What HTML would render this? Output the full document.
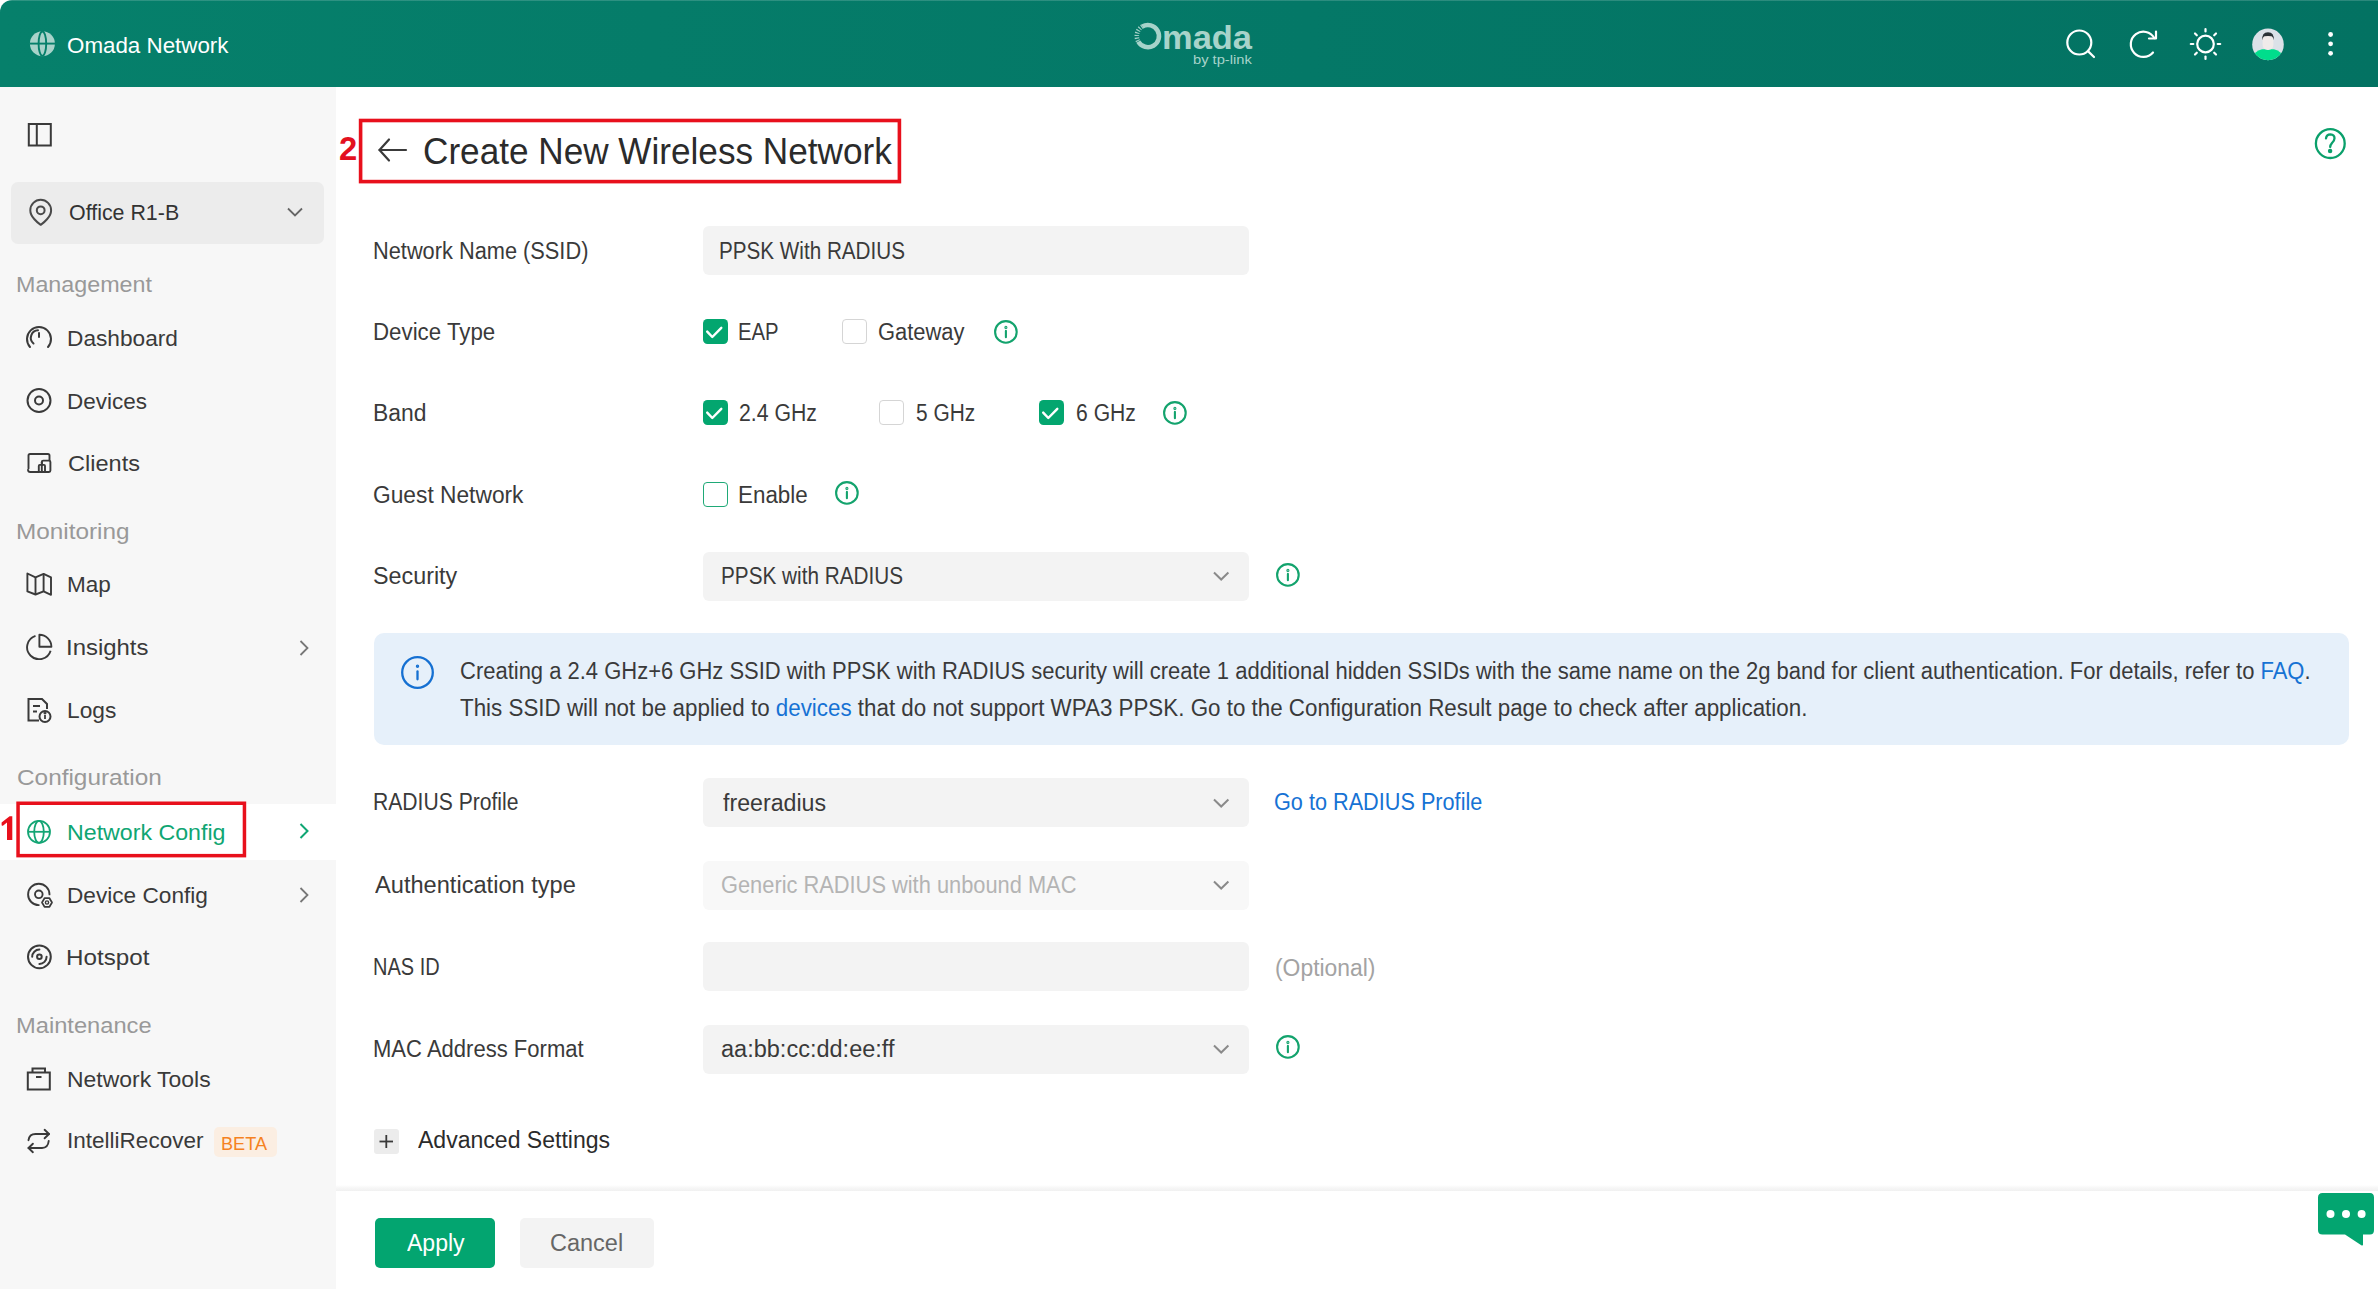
<!DOCTYPE html>
<html><head><meta charset="utf-8">
<style>
*{box-sizing:border-box;margin:0;padding:0}
html,body{width:2378px;height:1289px;overflow:hidden;background:#fff;font-family:"Liberation Sans",sans-serif;color:#333}
.abs{position:absolute}
.tx{position:absolute;white-space:nowrap;line-height:40px;height:40px;transform-origin:0 0}
</style></head><body>
<!-- header -->
<div class="abs" style="left:0;top:0;width:2378px;height:87px;background:linear-gradient(90deg,#06806b 0%,#047867 55%,#037262 100%);border-top-left-radius:12px"></div>
<div class="abs" style="left:8px;top:0;width:2370px;height:1px;background:rgba(255,255,255,0.16)"></div>
<svg class="abs" style="left:29px;top:30px" width="27" height="27" viewBox="0 0 27 27">
<circle cx="13.4" cy="13.7" r="12.5" fill="#a8d3ca"/>
<ellipse cx="13.4" cy="13.7" rx="3.8" ry="12.2" fill="none" stroke="#06806b" stroke-width="1.9"/>
<line x1="0.5" y1="13.6" x2="26.5" y2="13.6" stroke="#06806b" stroke-width="1.9"/>
</svg>
<svg class="abs" style="left:1130px;top:18px" width="40" height="36" viewBox="0 0 40 36" fill="none" stroke="#a7d3ca" stroke-width="4.6">
<path d="M8.29 23.65 A11.1 11.1 0 1 0 12.35 8.49"/>
<path d="M12.35 8.49 A11.1 11.1 0 0 0 8.29 23.65" stroke-dasharray="1.1 1.5"/>
</svg>
<!-- header right icons -->
<svg class="abs" style="left:2060px;top:24px" width="40" height="40" viewBox="0 0 40 40" fill="none" stroke="#fff" stroke-width="2.2" stroke-linecap="round">
<circle cx="19.3" cy="18.5" r="12"/><line x1="28.2" y1="27.4" x2="34" y2="33"/>
</svg>
<svg class="abs" style="left:2123px;top:24px" width="40" height="40" viewBox="0 0 40 40" fill="none" stroke="#fff" stroke-width="2.2" stroke-linecap="round" stroke-linejoin="round">
<path d="M31.3 14 A12.6 12.6 0 1 0 30 28.5"/><polyline points="26,14.5 33,14.5 33,7.5"/>
</svg>
<svg class="abs" style="left:2186px;top:24px" width="40" height="40" viewBox="0 0 40 40" fill="none" stroke="#fff" stroke-width="2.2" stroke-linecap="round">
<circle cx="19.5" cy="20" r="8.3"/>
<line x1="19.5" y1="5" x2="19.5" y2="7.5"/><line x1="19.5" y1="32.5" x2="19.5" y2="35"/>
<line x1="4.8" y1="20" x2="7.3" y2="20"/><line x1="31.7" y1="20" x2="34.2" y2="20"/>
<line x1="9" y1="9.5" x2="10.8" y2="11.3"/><line x1="28.2" y1="28.7" x2="30" y2="30.5"/>
<line x1="30" y1="9.5" x2="28.2" y2="11.3"/><line x1="10.8" y1="28.7" x2="9" y2="30.5"/>
</svg>
<svg class="abs" style="left:2250px;top:26px" width="36" height="36" viewBox="0 0 36 36">
<defs><clipPath id="av"><circle cx="18" cy="18.4" r="15.8"/></clipPath></defs>
<circle cx="18" cy="18.4" r="15.8" fill="#dbe1e8"/>
<g clip-path="url(#av)">
<path d="M2 34 Q4 24.5 12 23.2 L24 23.2 Q32 24.5 34 34 L34 40 L2 40 Z" fill="#00dd8c"/>
<rect x="12.6" y="8" width="10.8" height="16" rx="5" fill="#f0ebea"/>
<path d="M12.2 14.5 Q11.6 6.2 18 6.2 Q24.4 6.2 23.8 14.5 Q23 10.6 21.5 10.2 Q18 9.6 14.5 10.2 Q13 10.6 12.2 14.5 Z" fill="#2a3136"/>
</g>
</svg>
<svg class="abs" style="left:2320px;top:26px" width="20" height="36" viewBox="0 0 20 36" fill="#fff">
<circle cx="10.6" cy="8.5" r="2.4"/><circle cx="10.6" cy="17.8" r="2.4"/><circle cx="10.6" cy="27.3" r="2.4"/>
</svg>

<!-- sidebar -->
<div class="abs" style="left:0;top:87px;width:336px;height:1202px;background:#f7f7f7"></div>
<svg class="abs" style="left:26px;top:121px" width="28" height="28" viewBox="0 0 28 28" fill="none" stroke="#3a3a3a" stroke-width="2">
<rect x="2.8" y="3" width="22" height="21.5"/><line x1="10.8" y1="3" x2="10.8" y2="24.5"/>
</svg>
<div class="abs" style="left:11px;top:181.5px;width:313px;height:62.5px;background:#ececec;border-radius:7px"></div>
<svg class="abs" style="left:27px;top:198px" width="28" height="30" viewBox="0 0 28 30" fill="none" stroke="#4a4a4a" stroke-width="2" stroke-linejoin="round">
<path d="M13.7 26.8 Q10 24.3 7.2 21 Q3.3 16.8 3.3 12.2 A10.4 10.4 0 0 1 24.1 12.2 Q24.1 16.8 20.2 21 Q17.4 24.3 13.7 26.8 Z"/><circle cx="13.7" cy="12.3" r="3.9"/>
</svg>
<svg class="abs" style="left:285px;top:204px" width="20" height="16" viewBox="0 0 20 16" fill="none" stroke="#666" stroke-width="1.8"><polyline points="3,4.5 10,11.5 17,4.5"/></svg>

<div class="abs" style="left:0;top:804px;width:336px;height:56px;background:#fff"></div>
<svg class="abs" style="left:0;top:790px" width="260" height="80" viewBox="0 790 260 80"><rect x="18.05" y="803.25" width="226.4" height="52.4" fill="none" stroke="#e8101c" stroke-width="3.5"/></svg>
<svg class="abs" style="left:0;top:810px" width="16" height="34" viewBox="0 0 16 34"><path d="M9.6 6.2 H12.3 V29.9 H7 V12.6 L3.2 15.4 Q1.6 16.4 1.6 14.8 V12.4 Z" fill="#e8101c"/></svg>
<svg class="abs" style="left:296px;top:638px" width="16" height="20" viewBox="0 0 16 20" fill="none" stroke="#777" stroke-width="1.8"><polyline points="4.5,3 11.5,10 4.5,17"/></svg>
<svg class="abs" style="left:296px;top:821px" width="16" height="20" viewBox="0 0 16 20" fill="none" stroke="#0fa673" stroke-width="2"><polyline points="4.5,3 11.5,10 4.5,17"/></svg>
<svg class="abs" style="left:296px;top:885px" width="16" height="20" viewBox="0 0 16 20" fill="none" stroke="#777" stroke-width="1.8"><polyline points="4.5,3 11.5,10 4.5,17"/></svg>
<div class="abs" style="left:214px;top:1127px;width:63px;height:30px;background:#fbeee2;border-radius:5px"></div>
<!-- nav icons -->
<svg class="abs" style="left:25px;top:324px" width="28" height="26" viewBox="0 0 28 26" fill="none" stroke="#3a3a3a" stroke-width="2" stroke-linecap="round">
<path d="M5 23 A12 12 0 1 1 23 23"/><path d="M8.5 19.5 A7.5 7.5 0 0 1 13 6.3"/><line x1="14" y1="9" x2="14" y2="13"/>
</svg>
<svg class="abs" style="left:25px;top:387px" width="28" height="28" viewBox="0 0 28 28" fill="none" stroke="#3a3a3a" stroke-width="2">
<circle cx="14" cy="13.5" r="11.5"/><circle cx="14" cy="13.5" r="4"/>
</svg>
<svg class="abs" style="left:25px;top:451px" width="28" height="24" viewBox="0 0 28 24" fill="none" stroke="#3a3a3a" stroke-width="1.9" stroke-linejoin="round" stroke-linecap="round">
<path d="M3.5 17.5 V4.6 Q3.5 3 5.1 3 H22.9 Q24.5 3 24.5 4.6 V9"/><path d="M3 19 Q3.2 21 5.2 21 H13.8"/><rect x="16.8" y="9.6" width="8.6" height="11.4" rx="1.4"/><rect x="13.8" y="13.9" width="6.2" height="7.1" rx="1"/><path d="M16.9 13.9 V11.2"/>
</svg>
<svg class="abs" style="left:25px;top:571px" width="28" height="26" viewBox="0 0 28 26" fill="none" stroke="#3a3a3a" stroke-width="1.9" stroke-linejoin="round">
<path d="M2.4 2.5 L10.5 6.4 L18.6 2.9 L26 6.4 V23.8 L18.6 20.4 L10.5 23.5 L2.4 20.4 Z"/><line x1="10.5" y1="6.4" x2="10.5" y2="23.5"/><line x1="18.6" y1="2.9" x2="18.6" y2="20.4"/>
</svg>
<svg class="abs" style="left:25px;top:632px" width="28" height="28" viewBox="0 0 28 28" fill="none" stroke="#3a3a3a" stroke-width="1.9" stroke-linejoin="round">
<path d="M10.5 3.8 A12 12 0 1 0 25.6 18.7"/><path d="M14.4 2.8 V14.8 H26.4 A12 12 0 0 0 14.4 2.8 Z"/>
</svg>
<svg class="abs" style="left:25px;top:696px" width="28" height="28" viewBox="0 0 28 28" fill="none" stroke="#3a3a3a" stroke-width="2">
<path d="M14 24.5 H3.5 V3 H17 L22 8 V13"/><line x1="8" y1="10" x2="15" y2="10"/><line x1="8" y1="15.5" x2="12" y2="15.5"/>
<circle cx="20" cy="20.5" r="5.5"/><line x1="20" y1="19" x2="20" y2="23" stroke-width="1.8"/><circle cx="20" cy="16.8" r="0.6" fill="#333"/>
</svg>
<svg class="abs" style="left:25px;top:818px" width="28" height="28" viewBox="0 0 28 28" fill="none" stroke="#14a574" stroke-width="1.8">
<circle cx="14" cy="13.8" r="11"/><ellipse cx="14" cy="13.8" rx="4.8" ry="11"/><line x1="3" y1="13.8" x2="25" y2="13.8"/>
</svg>
<svg class="abs" style="left:25px;top:881px" width="30" height="30" viewBox="0 0 30 30" fill="none" stroke="#3a3a3a" stroke-width="1.9" stroke-linecap="round" stroke-linejoin="round">
<path d="M24.5 13.4 A10.7 10.7 0 1 0 13.8 24.1"/><circle cx="13.8" cy="13.3" r="3.8"/>
<polygon points="27,21.5 24.5,25.8 19.5,25.8 17,21.5 19.5,17.2 24.5,17.2" stroke-width="1.7"/><circle cx="22" cy="21.5" r="1.6" stroke-width="1.4"/>
</svg>
<svg class="abs" style="left:25px;top:943px" width="28" height="28" viewBox="0 0 28 28" fill="none" stroke="#3a3a3a" stroke-width="2" stroke-linecap="round">
<circle cx="14.4" cy="13.8" r="11.4"/><path d="M7.2 13.8 A7.2 7.2 0 0 1 14.4 6.6"/><path d="M21.6 13.8 A7.2 7.2 0 0 1 14.4 21"/><circle cx="14.4" cy="13.8" r="2.3"/>
</svg>
<svg class="abs" style="left:25px;top:1066px" width="28" height="26" viewBox="0 0 28 26" fill="none" stroke="#3a3a3a" stroke-width="2">
<rect x="2.8" y="6.5" width="22" height="17"/><path d="M7.5 6.5 V2.5 H20 V6.5"/><line x1="11" y1="11" x2="16.5" y2="11"/>
</svg>
<svg class="abs" style="left:25px;top:1128px" width="28" height="26" viewBox="0 0 28 26" fill="none" stroke="#3a3a3a" stroke-width="1.9" stroke-linecap="round" stroke-linejoin="round">
<path d="M3.5 12.2 Q4.3 6 10.5 6 H24"/><polyline points="19.6,1.8 24,6 19.6,10.3"/>
<path d="M23.7 13 Q23 20 17 20 H3.5"/><polyline points="7.9,15.7 3.5,20 7.9,24.2"/>
</svg>

<!-- main -->
<svg class="abs" style="left:340px;top:100px" width="580" height="100" viewBox="340 100 580 100"><rect x="360.6" y="120.5" width="538.8" height="61.1" fill="none" stroke="#e8101c" stroke-width="3.6"/></svg>
<svg class="abs" style="left:376px;top:136px" width="34" height="28" viewBox="0 0 34 28" fill="none" stroke="#3a3a3a" stroke-width="2.2" stroke-linecap="round" stroke-linejoin="round">
<polyline points="13,3.5 3.5,14 13,24.5"/><line x1="3.5" y1="14" x2="30" y2="14"/>
</svg>
<svg class="abs" style="left:2312px;top:126px" width="36" height="36" viewBox="0 0 36 36" fill="none" stroke="#0aa06b" stroke-width="2.3" stroke-linecap="round">
<circle cx="18.3" cy="17.6" r="14.4"/><path d="M14 12.3 Q14.5 8.3 18.5 8.3 Q22.5 8.5 22.5 12.2 Q22.5 14.5 20 17 Q18.2 19 18.2 21"/><circle cx="18.1" cy="25.1" r="1.1" fill="#0aa06b"/>
</svg>
<!-- inputs -->
<div class="abs" style="left:703px;top:225.5px;width:546px;height:49.5px;background:#f3f3f3;border-radius:6px"></div>
<div class="abs" style="left:703px;top:551.5px;width:546px;height:49.5px;background:#f3f3f3;border-radius:6px"></div>
<div class="abs" style="left:703px;top:778px;width:546px;height:49px;background:#f3f3f3;border-radius:6px"></div>
<div class="abs" style="left:703px;top:860.5px;width:546px;height:49px;background:#f8f8f8;border-radius:6px"></div>
<div class="abs" style="left:703px;top:942px;width:546px;height:49px;background:#f3f3f3;border-radius:6px"></div>
<div class="abs" style="left:703px;top:1024.5px;width:546px;height:49px;background:#f3f3f3;border-radius:6px"></div>
<!-- select chevrons -->
<svg class="abs" style="left:1211px;top:568px" width="20" height="16" viewBox="0 0 20 16" fill="none" stroke="#8a8a8a" stroke-width="2"><polyline points="3,4.5 10.2,11.5 17.4,4.5"/></svg>
<svg class="abs" style="left:1211px;top:794.5px" width="20" height="16" viewBox="0 0 20 16" fill="none" stroke="#8a8a8a" stroke-width="2"><polyline points="3,4.5 10.2,11.5 17.4,4.5"/></svg>
<svg class="abs" style="left:1211px;top:877px" width="20" height="16" viewBox="0 0 20 16" fill="none" stroke="#8a8a8a" stroke-width="2"><polyline points="3,4.5 10.2,11.5 17.4,4.5"/></svg>
<svg class="abs" style="left:1211px;top:1041px" width="20" height="16" viewBox="0 0 20 16" fill="none" stroke="#8a8a8a" stroke-width="2"><polyline points="3,4.5 10.2,11.5 17.4,4.5"/></svg>
<!-- checkboxes -->
<div class="abs" style="left:703px;top:319px;width:25px;height:25px;background:#03a66f;border-radius:4.5px"></div><svg class="abs" style="left:703px;top:319px" width="25" height="25" viewBox="0 0 25 25" fill="none" stroke="#fff" stroke-width="2.4" stroke-linecap="round" stroke-linejoin="round"><polyline points="4.2,12.6 9.3,18 18.3,8.8"/></svg>
<div class="abs" style="left:841.6px;top:319px;width:25px;height:25px;border:1.6px solid #d5d5d5;background:#fff;border-radius:4px"></div>
<div class="abs" style="left:703px;top:400px;width:25px;height:25px;background:#03a66f;border-radius:4.5px"></div><svg class="abs" style="left:703px;top:400px" width="25" height="25" viewBox="0 0 25 25" fill="none" stroke="#fff" stroke-width="2.4" stroke-linecap="round" stroke-linejoin="round"><polyline points="4.2,12.6 9.3,18 18.3,8.8"/></svg>
<div class="abs" style="left:879px;top:400px;width:25px;height:25px;border:1.6px solid #d5d5d5;background:#fff;border-radius:4px"></div>
<div class="abs" style="left:1039px;top:400px;width:25px;height:25px;background:#03a66f;border-radius:4.5px"></div><svg class="abs" style="left:1039px;top:400px" width="25" height="25" viewBox="0 0 25 25" fill="none" stroke="#fff" stroke-width="2.4" stroke-linecap="round" stroke-linejoin="round"><polyline points="4.2,12.6 9.3,18 18.3,8.8"/></svg>
<div class="abs" style="left:702.5px;top:481.5px;width:25px;height:25px;border:1.9px solid #1fa977;background:#fff;border-radius:4px"></div>
<!-- info icons -->
<svg class="abs" style="left:992px;top:317.5px" width="28" height="28" viewBox="0 0 28 28" fill="none" stroke="#13a36d" stroke-width="2.1" stroke-linecap="round"><circle cx="13.9" cy="13.9" r="10.8"/><line x1="13.9" y1="12.9" x2="13.9" y2="19.2"/><circle cx="13.9" cy="9.4" r="0.5" fill="#13a36d" stroke-width="2.1"/></svg>
<svg class="abs" style="left:1161px;top:398.5px" width="28" height="28" viewBox="0 0 28 28" fill="none" stroke="#13a36d" stroke-width="2.1" stroke-linecap="round"><circle cx="13.9" cy="13.9" r="10.8"/><line x1="13.9" y1="12.9" x2="13.9" y2="19.2"/><circle cx="13.9" cy="9.4" r="0.5" fill="#13a36d" stroke-width="2.1"/></svg>
<svg class="abs" style="left:833px;top:479px" width="28" height="28" viewBox="0 0 28 28" fill="none" stroke="#13a36d" stroke-width="2.1" stroke-linecap="round"><circle cx="13.9" cy="13.9" r="10.8"/><line x1="13.9" y1="12.9" x2="13.9" y2="19.2"/><circle cx="13.9" cy="9.4" r="0.5" fill="#13a36d" stroke-width="2.1"/></svg>
<svg class="abs" style="left:1274px;top:561px" width="28" height="28" viewBox="0 0 28 28" fill="none" stroke="#13a36d" stroke-width="2.1" stroke-linecap="round"><circle cx="13.9" cy="13.9" r="10.8"/><line x1="13.9" y1="12.9" x2="13.9" y2="19.2"/><circle cx="13.9" cy="9.4" r="0.5" fill="#13a36d" stroke-width="2.1"/></svg>
<svg class="abs" style="left:1274px;top:1033.3px" width="28" height="28" viewBox="0 0 28 28" fill="none" stroke="#13a36d" stroke-width="2.1" stroke-linecap="round"><circle cx="13.9" cy="13.9" r="10.8"/><line x1="13.9" y1="12.9" x2="13.9" y2="19.2"/><circle cx="13.9" cy="9.4" r="0.5" fill="#13a36d" stroke-width="2.1"/></svg>
<!-- info box -->
<div class="abs" style="left:374px;top:632.5px;width:1975px;height:112px;background:#e6f0fa;border-radius:10px"></div>
<svg class="abs" style="left:399px;top:654px" width="38" height="38" viewBox="0 0 38 38" fill="none" stroke="#1570d2" stroke-width="2.3" stroke-linecap="round">
<circle cx="18.5" cy="18.5" r="15.3"/><line x1="18.5" y1="17.4" x2="18.5" y2="25.3"/><circle cx="18.5" cy="12.3" r="0.6" fill="#1570d2" stroke-width="2.2"/>
</svg>
<!-- advanced -->
<div class="abs" style="left:374px;top:1129px;width:25px;height:24.5px;background:#ececec;border-radius:3px"></div>
<svg class="abs" style="left:374px;top:1129px" width="25" height="25" viewBox="0 0 25 25" fill="none" stroke="#3a3a3a" stroke-width="1.8"><line x1="5.5" y1="12.5" x2="19" y2="12.5"/><line x1="12.3" y1="6" x2="12.3" y2="19"/></svg>
<!-- footer -->
<div class="abs" style="left:336px;top:1185px;width:2042px;height:6px;background:linear-gradient(180deg,#fff 0%,#f6f6f6 50%,#f1f1f1 100%)"></div>
<div class="abs" style="left:375px;top:1218px;width:120px;height:49.5px;background:#03a570;border-radius:5px"></div>
<div class="abs" style="left:520px;top:1218px;width:134px;height:49.5px;background:#f3f3f3;border-radius:5px"></div>
<svg class="abs" style="left:2316px;top:1191px" width="62" height="60" viewBox="0 0 62 60">
<path d="M6.5 2 H54 Q58 2 58 6.5 V39 Q58 43.5 54 43.5 H47 V53.5 Q47 55.2 45.3 54.3 L29 43.5 H6.5 Q2 43.5 2 39 V6.5 Q2 2 6.5 2 Z" fill="#03a570"/>
<circle cx="14.5" cy="23" r="4" fill="#fff"/><circle cx="30" cy="23" r="4" fill="#fff"/><circle cx="45.6" cy="23" r="4" fill="#fff"/>
</svg>
<div class="tx" style="left:66.56px;top:25.60px;font-size:21.5px;font-weight:400;color:#fff;transform:scaleX(1.0396)">Omada Network</div>
<div class="tx" style="left:68.64px;top:193.00px;font-size:22.3px;font-weight:400;color:#333;transform:scaleX(0.9593)">Office R1-B</div>
<div class="tx" style="left:16.11px;top:264.60px;font-size:22.3px;font-weight:400;color:#999;transform:scaleX(1.0445)">Management</div>
<div class="tx" style="left:66.87px;top:319.20px;font-size:22.3px;font-weight:400;color:#3a3a3a;transform:scaleX(1.0170)">Dashboard</div>
<div class="tx" style="left:66.88px;top:381.90px;font-size:22.3px;font-weight:400;color:#3a3a3a;transform:scaleX(1.0078)">Devices</div>
<div class="tx" style="left:67.54px;top:444.20px;font-size:22.3px;font-weight:400;color:#3a3a3a;transform:scaleX(1.0561)">Clients</div>
<div class="tx" style="left:16.12px;top:511.70px;font-size:22.3px;font-weight:400;color:#999;transform:scaleX(1.0911)">Monitoring</div>
<div class="tx" style="left:66.58px;top:565.20px;font-size:22.3px;font-weight:400;color:#3a3a3a;transform:scaleX(1.0098)">Map</div>
<div class="tx" style="left:66.45px;top:627.60px;font-size:22.3px;font-weight:400;color:#3a3a3a;transform:scaleX(1.0730)">Insights</div>
<div class="tx" style="left:66.56px;top:690.50px;font-size:22.3px;font-weight:400;color:#3a3a3a;transform:scaleX(1.0196)">Logs</div>
<div class="tx" style="left:16.91px;top:758.00px;font-size:22.3px;font-weight:400;color:#999;transform:scaleX(1.0923)">Configuration</div>
<div class="tx" style="left:66.52px;top:813.30px;font-size:22.3px;font-weight:400;color:#0fa673;transform:scaleX(1.0396)">Network Config</div>
<div class="tx" style="left:66.57px;top:875.70px;font-size:22.3px;font-weight:400;color:#3a3a3a;transform:scaleX(1.0154)">Device Config</div>
<div class="tx" style="left:66.43px;top:938.00px;font-size:22.3px;font-weight:400;color:#3a3a3a;transform:scaleX(1.0853)">Hotspot</div>
<div class="tx" style="left:15.88px;top:1005.80px;font-size:22.3px;font-weight:400;color:#999;transform:scaleX(1.0624)">Maintenance</div>
<div class="tx" style="left:66.54px;top:1059.50px;font-size:22.3px;font-weight:400;color:#3a3a3a;transform:scaleX(1.0285)">Network Tools</div>
<div class="tx" style="left:66.58px;top:1121.00px;font-size:22.3px;font-weight:400;color:#3a3a3a;transform:scaleX(1.0105)">IntelliRecover</div>
<div class="tx" style="left:221.49px;top:1123.80px;font-size:18px;font-weight:400;color:#f5821f;transform:scaleX(1.0068)">BETA</div>
<div class="tx" style="left:339.01px;top:129.20px;font-size:33px;font-weight:700;color:#e3111f;transform:scaleX(0.9937)">2</div>
<div class="tx" style="left:422.70px;top:132.00px;font-size:37px;font-weight:400;color:#2b2b2b;transform:scaleX(0.9499)">Create New Wireless Network</div>
<div class="tx" style="left:372.91px;top:230.80px;font-size:23px;font-weight:400;color:#3a3a3a;transform:scaleX(0.9469)">Network Name (SSID)</div>
<div class="tx" style="left:719.20px;top:230.60px;font-size:23px;font-weight:400;color:#3a3a3a;transform:scaleX(0.8980)">PPSK With RADIUS</div>
<div class="tx" style="left:372.86px;top:312.20px;font-size:23px;font-weight:400;color:#3a3a3a;transform:scaleX(0.9691)">Device Type</div>
<div class="tx" style="left:738.23px;top:312.00px;font-size:23px;font-weight:400;color:#3a3a3a;transform:scaleX(0.8837)">EAP</div>
<div class="tx" style="left:878.45px;top:312.00px;font-size:23px;font-weight:400;color:#3a3a3a;transform:scaleX(0.9533)">Gateway</div>
<div class="tx" style="left:372.81px;top:393.40px;font-size:23px;font-weight:400;color:#3a3a3a;transform:scaleX(0.9940)">Band</div>
<div class="tx" style="left:739.08px;top:392.80px;font-size:23px;font-weight:400;color:#3a3a3a;transform:scaleX(0.9244)">2.4 GHz</div>
<div class="tx" style="left:916.39px;top:393.00px;font-size:23px;font-weight:400;color:#3a3a3a;transform:scaleX(0.9079)">5 GHz</div>
<div class="tx" style="left:1075.88px;top:393.30px;font-size:23px;font-weight:400;color:#3a3a3a;transform:scaleX(0.9190)">6 GHz</div>
<div class="tx" style="left:373.21px;top:474.60px;font-size:23px;font-weight:400;color:#3a3a3a;transform:scaleX(0.9894)">Guest Network</div>
<div class="tx" style="left:738.05px;top:474.60px;font-size:23px;font-weight:400;color:#3a3a3a;transform:scaleX(0.9739)">Enable</div>
<div class="tx" style="left:373.19px;top:556.20px;font-size:23px;font-weight:400;color:#3a3a3a;transform:scaleX(1.0134)">Security</div>
<div class="tx" style="left:720.90px;top:555.80px;font-size:23px;font-weight:400;color:#3a3a3a;transform:scaleX(0.9015)">PPSK with RADIUS</div>
<div class="tx" style="left:460.24px;top:650.80px;font-size:23px;font-weight:400;color:#3a3a3a;transform:scaleX(0.9558)">Creating a 2.4 GHz+6 GHz SSID with PPSK with RADIUS security will create 1 additional hidden SSIDs with the same name on the 2g band for client authentication. For details, refer to <span style="color:#1672d4">FAQ</span>.</div>
<div class="tx" style="left:460.03px;top:688.00px;font-size:23px;font-weight:400;color:#3a3a3a;transform:scaleX(0.9725)">This SSID will not be applied to <span style="color:#1672d4">devices</span> that do not support WPA3 PPSK. Go to the Configuration Result page to check after application.</div>
<div class="tx" style="left:372.96px;top:782.20px;font-size:23px;font-weight:400;color:#3a3a3a;transform:scaleX(0.9179)">RADIUS Profile</div>
<div class="tx" style="left:722.90px;top:782.50px;font-size:23px;font-weight:400;color:#3a3a3a;transform:scaleX(1.0079)">freeradius</div>
<div class="tx" style="left:1273.66px;top:781.90px;font-size:23px;font-weight:400;color:#1672d4;transform:scaleX(0.9420)">Go to RADIUS Profile</div>
<div class="tx" style="left:374.80px;top:864.50px;font-size:23px;font-weight:400;color:#3a3a3a;transform:scaleX(1.0267)">Authentication type</div>
<div class="tx" style="left:721.25px;top:864.80px;font-size:23px;font-weight:400;color:#b4b4b4;transform:scaleX(0.9489)">Generic RADIUS with unbound MAC</div>
<div class="tx" style="left:373.06px;top:947.00px;font-size:23px;font-weight:400;color:#3a3a3a;transform:scaleX(0.8689)">NAS ID</div>
<div class="tx" style="left:1275.21px;top:947.50px;font-size:23px;font-weight:400;color:#a3a3a3;transform:scaleX(0.9949)">(Optional)</div>
<div class="tx" style="left:372.88px;top:1028.60px;font-size:23px;font-weight:400;color:#3a3a3a;transform:scaleX(0.9583)">MAC Address Format</div>
<div class="tx" style="left:721.18px;top:1028.70px;font-size:23px;font-weight:400;color:#3a3a3a;transform:scaleX(1.0225)">aa:bb:cc:dd:ee:ff</div>
<div class="tx" style="left:418.40px;top:1119.60px;font-size:23px;font-weight:400;color:#2b2b2b;transform:scaleX(1.0016)">Advanced Settings</div>
<div class="tx" style="left:406.60px;top:1223.20px;font-size:23px;font-weight:400;color:#fff;transform:scaleX(1.0018)">Apply</div>
<div class="tx" style="left:550.48px;top:1223.30px;font-size:23px;font-weight:400;color:#666;transform:scaleX(1.0217)">Cancel</div>
<div class="tx" style="left:1161.77px;top:17.00px;font-size:34px;font-weight:700;color:#a7d3ca;transform:scaleX(1.0138)">mada</div>
<div class="tx" style="left:1192.87px;top:39.60px;font-size:13px;font-weight:400;color:#a7d3ca;transform:scaleX(1.1294)">by tp-link</div>
</body></html>
